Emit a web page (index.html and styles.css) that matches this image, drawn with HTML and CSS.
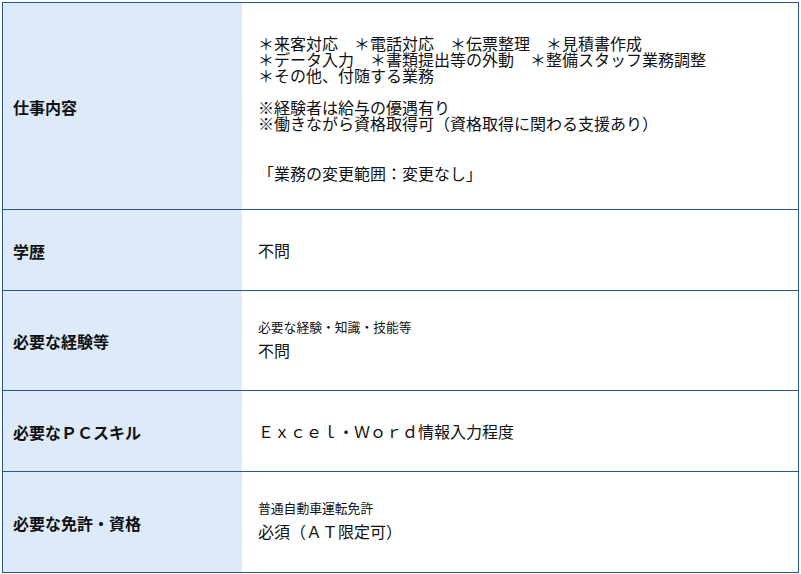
FILE: index.html
```html
<!DOCTYPE html>
<html lang="ja">
<head>
<meta charset="utf-8">
<title>募集要項</title>
<link rel="stylesheet" href="styles.css">
</head>
<body>
<div class="spec">
  <div class="row">
    <div class="label">仕事内容</div>
    <div class="value desc">
      <p>＊来客対応　＊電話対応　＊伝票整理　＊見積書作成<br>＊データ入力　＊書類提出等の外動　＊整備スタッフ業務調整<br>＊その他、付随する業務<br><br>※経験者は給与の優遇有り<br>※働きながら資格取得可（資格取得に関わる支援あり）</p>
      <p class="note">「業務の変更範囲：変更なし」</p>
    </div>
  </div>
  <div class="row">
    <div class="label">学歴</div>
    <div class="value"><p>不問</p></div>
  </div>
  <div class="row">
    <div class="label">必要な経験等</div>
    <div class="value">
      <p class="sub">必要な経験・知識・技能等</p>
      <p>不問</p>
    </div>
  </div>
  <div class="row">
    <div class="label">必要なＰＣスキル</div>
    <div class="value"><p>Ｅｘｃｅｌ・Ｗｏｒｄ情報入力程度</p></div>
  </div>
  <div class="row">
    <div class="label">必要な免許・資格</div>
    <div class="value">
      <p class="sub">普通自動車運転免許</p>
      <p>必須（ＡＴ限定可）</p>
    </div>
  </div>
</div>
</body>
</html>
```

FILE: styles.css
```css
* { box-sizing: border-box; }

html, body { background: #ffffff; }

body {
  margin: 2px;
  font-family: "Noto Sans CJK JP", "Noto Sans", sans-serif;
  color: #111111;
  font-size: 16px;
}

p { margin: 0; }

.spec {
  width: 797px;
  border: 1px solid #285796;
}

.row {
  display: grid;
  grid-template-columns: 239px 1fr;
  border-top: 1px solid #285796;
}

.row:first-child { border-top: none; }

.label {
  background: #dceafa;
  display: flex;
  align-items: center;
  padding: 1px 10px 0;
  font-weight: bold;
  font-size: 16px;
  color: #111111;
}

.value {
  padding: 30px 16px;
  line-height: 20px;
}

.row:last-child .value { padding-bottom: 31px; }

.value.desc {
  padding: 32px 16px 28px;
  line-height: 16px;
}

.note { margin-top: 34px; }

.sub {
  font-size: 12.8px;
  line-height: 12px;
  margin-bottom: 7px;
}
```
